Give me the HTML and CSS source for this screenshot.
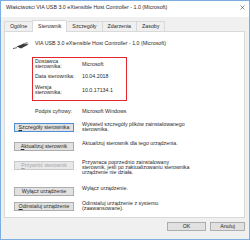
FILE: index.html
```html
<!DOCTYPE html>
<html lang="pl">
<head>
	<meta charset="UTF-8">
	<title>Właściwości VIA USB 3.0 eXtensible Host Controller</title>
	<link rel="stylesheet" href="styles.css">
</head>
<body>

	<div class="window">
		<div class="titlebar">
			<span>Właściwości VIA USB 3.0 eXtensible Host Controller - 1.0 (Microsoft)</span>
			<svg class="close" viewBox="0 0 10 10">
				<path d="M1 1 L9 9 M9 1 L1 9" stroke="#333" stroke-width="1.1" fill="none"/>
			</svg>
		</div>

		<div class="tabs">
			<span class="tab">Ogólne</span>
			<span class="tab active">Sterownik</span>
			<span class="tab">Szczegóły</span>
			<span class="tab">Zdarzenia</span>
			<span class="tab last">Zasoby</span>
		</div>

		<div class="panel">
			<div class="device">
				<svg class="usb" viewBox="0 0 16 7">
					<path d="M0 6.6 L4 5.6" stroke="#555" stroke-width="0.9"/>
					<polygon points="3.5,4.6 11,1.6 15.5,2.6 8,6.4" fill="#3a3a3a"/>
					<polygon points="9.5,1.4 13.5,0.2 16,1 12,2.4" fill="#9a9a9a"/>
				</svg>
				<span>VIA USB 3.0 eXtensible Host Controller - 1.0 (Microsoft)</span>
			</div>

			<div class="highlight">
				<div class="prop first">
					<span class="label">Dostawca<br>sterownika:</span>
					<span class="value">Microsoft</span>
				</div>
				<div class="prop second">
					<span class="label">Data sterownika:</span>
					<span class="value">10.04.2018</span>
				</div>
				<div class="prop third">
					<span class="label">Wersja<br>sterownika:</span>
					<span class="value">10.0.17134.1</span>
				</div>
			</div>

			<div class="prop sign">
				<span class="label">Podpis cyfrowy:</span>
				<span class="value">Microsoft Windows</span>
			</div>

			<div class="action">
				<button class="focused"><u>S</u>zczegóły sterownika</button>
				<p>Wyświetl szczegóły plików zainstalowanego<br>sterownika.</p>
			</div>
			<div class="action">
				<button><u>A</u>ktualizuj sterownik</button>
				<p>Aktualizuj sterownik dla tego urządzenia.</p>
			</div>
			<div class="action tall">
				<button disabled><u>P</u>rzywróć sterownik</button>
				<p>Przywraca poprzednio zainstalowany<br>sterownik, jeśli po zaktualizowaniu sterownika<br>urządzenie nie działa.</p>
			</div>
			<div class="action short">
				<button>Wyłącz urządzenie</button>
				<p>Wyłącz urządzenie.</p>
			</div>
			<div class="action">
				<button><u>O</u>dinstaluj urządzenie</button>
				<p>Odinstaluj urządzenie z systemu<br>(zaawansowane).</p>
			</div>
		</div>

		<div class="footer">
			<button class="wide">OK</button>
			<button class="wide">Anuluj</button>
		</div>
	</div>

</body>
</html>
```

FILE: styles.css
```css
body {
	margin: 0;
	font-family: "Liberation Sans", Arial, sans-serif;
	font-size: 5.3px;
	color: #2a2a2a;
	background: #fff;
}

.window {
	width: 250px;
	height: 240px;
	box-sizing: border-box;
	border: 1px solid #7eaee0;
	background: #f0f0f0;
	display: flex;
	flex-direction: column;
}

.titlebar {
	height: 16px;
	flex: none;
	box-sizing: border-box;
	padding: 3px 4px 0 5px;
	line-height: 6px;
	background: #fff;
	display: flex;
	justify-content: space-between;
	align-items: flex-start;
}

.close {
	width: 5px;
	height: 5px;
	margin-top: 0.5px;
}

.tabs {
	height: 14px;
	flex: none;
	padding-left: 3px;
	display: flex;
	align-items: flex-end;
}

.tab {
	height: 10px;
	box-sizing: border-box;
	padding: 0 5px;
	line-height: 8.5px;
	border: 1px solid #d9d9d9;
	border-right: none;
	border-bottom: none;
}

.tab.last {
	border-right: 1px solid #d9d9d9;
}

.tab.active {
	height: 12px;
	margin-bottom: -1px;
	line-height: 10px;
	background: #fff;
	position: relative;
}

.panel {
	height: 187px;
	flex: none;
	box-sizing: border-box;
	margin: 0 4px 0 3px;
	background: #fff;
	border: 1px solid #d9d9d9;
	line-height: 5px;
}

.device {
	margin-top: 9px;
	padding-left: 8px;
	display: flex;
	align-items: flex-start;
}

.usb {
	width: 16px;
	height: 7px;
	margin-top: 1px;
	margin-right: 6px;
}

.highlight {
	width: 95px;
	height: 44px;
	box-sizing: border-box;
	margin: 8px 0 0 27px;
	padding-left: 2px;
	border: 1px solid #e3262e;
}

.prop {
	display: flex;
	align-items: center;
}

.prop .label {
	width: 47px;
	flex: none;
}

.prop.first {
	margin-top: 1px;
}

.prop.second {
	margin-top: 5px;
}

.prop.third {
	margin-top: 6px;
}

.prop.sign {
	margin-top: 8px;
	padding-left: 30px;
}

.action {
	height: 19px;
	display: flex;
	align-items: flex-start;
	padding-left: 9px;
}

.sign + .action {
	margin-top: 8px;
}

.action.tall {
	height: 26px;
}

.action.short {
	height: 15px;
}

.action p {
	margin: 0 0 0 8px;
}

button {
	font-family: inherit;
	font-size: 5.3px;
	color: #2a2a2a;
	padding: 0;
	width: 60px;
	height: 9px;
	margin-top: 1px;
	flex: none;
	background: #e1e1e1;
	border: 1px solid #adadad;
	line-height: 7px;
}

button.focused {
	border-color: #4f8fd8;
}

button:disabled {
	color: #a6a6a6;
	background: #e8e8e8;
	border-color: #c8c8c8;
}

.footer {
	display: flex;
	justify-content: flex-end;
	gap: 4px;
	padding: 4px 4px 0 0;
}

.footer .wide {
	width: 35px;
	margin-top: 0;
}

.footer .wide:first-child {
	width: 39px;
}
```
